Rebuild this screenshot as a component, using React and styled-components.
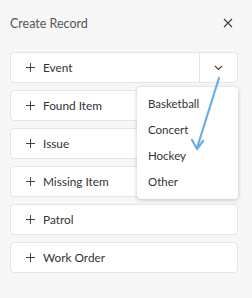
import styled, { createGlobalStyle } from "styled-components";

const Global = createGlobalStyle`
  html, body {
    margin: 0;
    padding: 0;
    background: #f7f7f8;
  }
  body {
    font-family: Lato, "Open Sans", sans-serif;
    color: #333;
  }
`;

const Panel = styled.div`
  position: relative;
  width: 252px;
  height: 298px;
  box-sizing: border-box;
  padding: 12px 14px 0 10px;
  background: #f7f7f8;
`;

const Header = styled.div`
  display: flex;
  align-items: center;
  justify-content: space-between;
  height: 22px;
  margin-bottom: 18px;
`;

const Title = styled.div`
  font-size: 12.5px;
  color: #555;
`;

const Close = styled.button`
  border: none;
  background: none;
  padding: 0;
  width: 16px;
  height: 16px;
  display: flex;
  align-items: center;
  justify-content: center;
  color: #444;
  margin-right: 2px;
`;

const List = styled.div`
  display: flex;
  flex-direction: column;
  gap: 7px;
`;

const Row = styled.div`
  display: flex;
  height: 31px;
  box-sizing: border-box;
  background: #fff;
  border: 1px solid #e3e5ee;
  border-radius: 4px;
`;

const Main = styled.div`
  flex: 1;
  display: flex;
  align-items: center;
  gap: 8px;
  padding: 0 0 1px 15px;
  font-size: 11.8px;
  color: #333;
`;

const Toggle = styled.div`
  width: 37px;
  border-left: 1px solid #e3e5ee;
  display: flex;
  align-items: center;
  justify-content: center;
  color: #444;
`;

const Menu = styled.div`
  position: absolute;
  left: 137px;
  top: 87px;
  width: 101px;
  box-sizing: border-box;
  padding: 3px 0 5px;
  background: #fff;
  border-radius: 4px;
  box-shadow: 0 1px 4px rgba(0, 0, 0, 0.22);
  display: flex;
  flex-direction: column;
`;

const MenuItem = styled.div`
  height: 26px;
  display: flex;
  align-items: center;
  padding-left: 11px;
  font-size: 11.5px;
  color: #333;
`;

const Annotation = styled.svg`
  position: absolute;
  left: 0;
  top: 0;
  pointer-events: none;
`;

const Plus = () => (
  <svg width="9" height="9" viewBox="0 0 9 9">
    <path d="M4.5 0v9M0 4.5h9" stroke="#444" strokeWidth="1" />
  </svg>
);

const items = ["Event", "Found Item", "Issue", "Missing Item", "Patrol", "Work Order"];

export default function App() {
  return (
    <>
      <Global />
      <Panel>
        <Header>
          <Title>Create Record</Title>
          <Close>
            <svg width="10" height="10" viewBox="0 0 10 10">
              <path d="M1 1l8 8M9 1l-8 8" stroke="#444" strokeWidth="1.2" />
            </svg>
          </Close>
        </Header>
        <List>
          {items.map((name, i) => (
            <Row key={name}>
              <Main>
                <Plus />
                {name}
              </Main>
              {i === 0 && (
                <Toggle>
                  <svg width="9" height="6" viewBox="0 0 9 6">
                    <path d="M1 1l3.5 3.5L8 1" stroke="#444" strokeWidth="1.2" fill="none" />
                  </svg>
                </Toggle>
              )}
            </Row>
          ))}
        </List>
        <Menu>
          <MenuItem>Basketball</MenuItem>
          <MenuItem>Concert</MenuItem>
          <MenuItem>Hockey</MenuItem>
          <MenuItem>Other</MenuItem>
        </Menu>
        <Annotation width="252" height="298">
          <path d="M219 78L197 148" stroke="#6aaee6" strokeWidth="2.2" strokeLinecap="round" />
          <path d="M192 140L197 149L203 141" stroke="#6aaee6" strokeWidth="2.2" fill="none" strokeLinecap="round" strokeLinejoin="round" />
        </Annotation>
      </Panel>
    </>
  );
}
